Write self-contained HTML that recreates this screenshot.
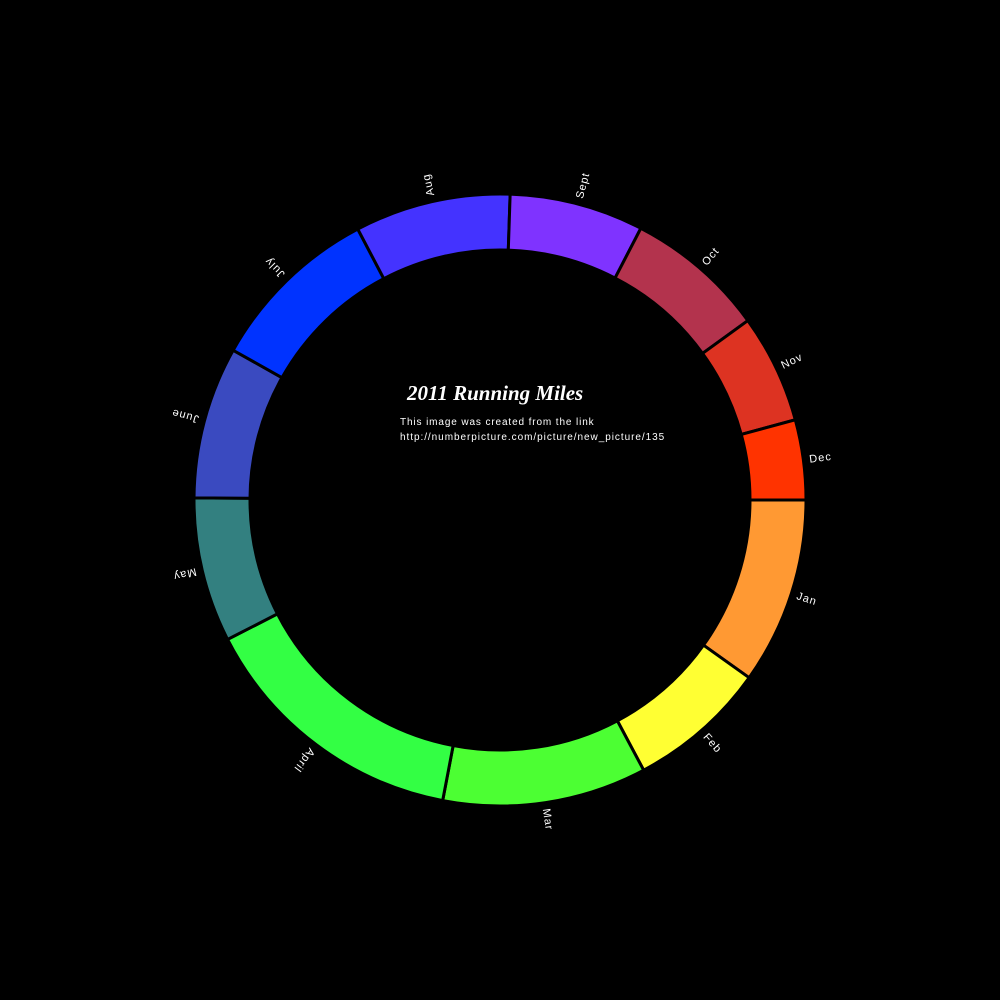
<!DOCTYPE html>
<html><head><meta charset="utf-8"><style>
html,body{margin:0;padding:0;background:#000;width:1000px;height:1000px;overflow:hidden}
svg{display:block}
.l{fill:#fff;font-family:"Liberation Sans",sans-serif;font-size:11px;letter-spacing:1px}
</style></head><body>
<svg id="s" width="1000" height="1000" xmlns="http://www.w3.org/2000/svg">
<text x="407" y="400" fill="#fff" font-family="Liberation Serif,serif" font-style="italic" font-weight="bold" font-size="21">2011 Running Miles</text>
<text x="400" y="425" fill="#fff" font-family="Liberation Sans,sans-serif" font-size="10" letter-spacing="0.88">This image was created from the link</text>
<text x="400" y="440" fill="#fff" font-family="Liberation Sans,sans-serif" font-size="10" letter-spacing="0.95">http://numberpicture.com/picture/new_picture/135</text>
</svg>
<script>
var d=[["Jan",0,35.5,"#ff9933"],["Feb",35.5,62,"#ffff33"],["Mar",62,100.8,"#4cff33"],["April",100.8,152.9,"#33ff44"],["May",152.9,180.4,"#338080"],["June",180.4,209.3,"#3a4ac0"],["July",209.3,242.3,"#0033ff"],["Aug",242.3,271.9,"#4433ff"],["Sept",271.9,297.4,"#7f33ff"],["Oct",297.4,324.1,"#b3334d"],["Nov",324.1,344.8,"#dd3322"],["Dec",344.8,360,"#ff3300"]];
var s=document.getElementById("s"),ns="http://www.w3.org/2000/svg",R=306,r=250,cx=500,cy=500;
function p(a,rad){a=a*Math.PI/180;return (cx+rad*Math.cos(a)).toFixed(2)+","+(cy+rad*Math.sin(a)).toFixed(2);}
d.forEach(function(e){
var a0=e[1],a1=e[2],lg=(a1-a0)>180?1:0;
var path=document.createElementNS(ns,"path");
path.setAttribute("d","M"+p(a0,R)+"A"+R+","+R+" 0 "+lg+" 1 "+p(a1,R)+"L"+p(a1,r)+"A"+r+","+r+" 0 "+lg+" 0 "+p(a0,r)+"Z");
path.setAttribute("fill",e[3]);path.setAttribute("stroke","#000");path.setAttribute("stroke-width","3");
s.appendChild(path);
var m=(a0+a1)/2,t=document.createElementNS(ns,"text");
t.setAttribute("class","l");t.setAttribute("x",cx+312);t.setAttribute("y",cy+4);
t.setAttribute("transform","rotate("+m+" "+cx+" "+cy+")");t.textContent=e[0];s.appendChild(t);
});
</script>
</body></html>
